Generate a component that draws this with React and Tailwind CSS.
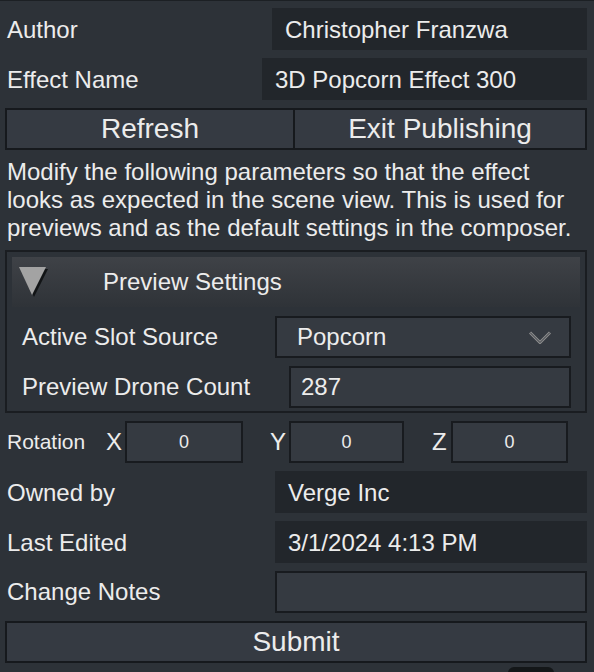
import React from 'react';

const font = "font-['Liberation_Sans',Arial,sans-serif]";

const ReadonlyRow = ({ label, value, fieldWidth }) => (
  <div className="flex h-[42px] items-center">
    <div className="flex-1 pl-[2px] pt-[1px] text-[24px] leading-none">{label}</div>
    <div className={`${fieldWidth} h-full bg-[#22262b] flex items-center pl-[13px] pt-[1px] text-[24px]`}>
      {value}
    </div>
  </div>
);

const RotField = ({ axis, width }) => (
  <div className="flex items-center h-full">
    <span className="text-[24px] w-[19px]">{axis}</span>
    <div className={`${width} h-full bg-[#353a41] border-2 border-[#181b1f] flex items-center justify-center text-[18px]`}>
      0
    </div>
  </div>
);

export default function App() {
  return (
    <div className={`w-[594px] h-[672px] bg-[#2d3238] border-t border-[#1c2024] overflow-hidden text-[#ececec] ${font}`}>
      <div className="flex flex-col gap-2 pl-[5px] pr-[7px] pt-[7px]">
        <ReadonlyRow label="Author" value="Christopher Franzwa" fieldWidth="w-[315px]" />
        <ReadonlyRow label="Effect Name" value="3D Popcorn Effect 300" fieldWidth="w-[325px]" />

        {/* Refresh / Exit */}
        <div className="flex h-[42px] border-2 border-[#16191d] bg-[#353a42] text-[28px]">
          <div className="w-[288px] flex items-center justify-center border-r-2 border-[#16191d]">Refresh</div>
          <div className="flex-1 flex items-center justify-center">Exit Publishing</div>
        </div>

        <p className="w-[572px] text-[24px] leading-[28px] pl-[2px]">
          Modify the following parameters so that the effect looks as expected in the scene view. This is used for previews and as the default settings in the composer.
        </p>

        {/* Preview Settings panel */}
        <div className="border-2 border-[#1a1d21] px-[5px] pt-[5px] pb-[3px] flex flex-col">
          <div className="h-[50px] bg-gradient-to-b from-[#3f4247] to-[#2f3338] flex items-center">
            <svg width="40" height="34" viewBox="0 0 40 34" className="ml-[6px]">
              <polygon points="3,4 30,4 16,32" fill="#121416" />
              <polygon points="1,2 28,2 14,30" fill="#a3a3a3" />
            </svg>
            <span className="ml-[45px] text-[24px]">Preview Settings</span>
          </div>
          <div className="flex flex-col gap-2 mt-[9px]">
            <div className="flex h-[42px] items-center pr-[9px]">
              <div className="flex-1 pl-[10px] text-[24px]">Active Slot Source</div>
              <div className="w-[296px] h-full bg-[#353a41] border-2 border-[#181b1f] flex items-center pl-[20px] pr-[18px] text-[24px]">
                <span className="flex-1">Popcorn</span>
                <svg width="22" height="13" viewBox="0 0 22 13">
                  <path d="M1 1.5 L11 11.5 L21 1.5" fill="none" stroke="#8f8f8f" strokeWidth="3" />
                  <path d="M1 1.5 L11 11.5 L21 1.5" fill="none" stroke="#353a41" strokeWidth="1" />
                </svg>
              </div>
            </div>
            <div className="flex h-[42px] items-center pr-[9px]">
              <div className="flex-1 pl-[10px] text-[24px]">Preview Drone Count</div>
              <div className="w-[282px] h-full bg-[#353a41] border-2 border-[#181b1f] flex items-center pl-[10px] text-[24px]">
                287
              </div>
            </div>
          </div>
        </div>

        {/* Rotation */}
        <div className="flex h-[42px] items-center">
          <span className="w-[101px] pl-[2px] text-[21px]">Rotation</span>
          <RotField axis="X" width="w-[118px]" />
          <div className="w-[27px]" />
          <RotField axis="Y" width="w-[115px]" />
          <div className="w-[28px]" />
          <RotField axis="Z" width="w-[117px]" />
        </div>

        <ReadonlyRow label="Owned by" value="Verge Inc" fieldWidth="w-[312px]" />
        <ReadonlyRow label="Last Edited" value="3/1/2024 4:13 PM" fieldWidth="w-[312px]" />

        <div className="flex h-[42px] items-center">
          <div className="flex-1 pl-[2px] text-[24px]">Change Notes</div>
          <div className="w-[312px] h-full bg-[#353a41] border-2 border-[#181b1f]" />
        </div>

        <div className="h-[42px] border-2 border-[#16191d] bg-[#353a42] flex items-center justify-center text-[28px]">
          Submit
        </div>
        <div className="-mt-1 ml-[503px] w-[46px] h-[8px] rounded-t-[6px] bg-[#141719]" />
      </div>
    </div>
  );
}
